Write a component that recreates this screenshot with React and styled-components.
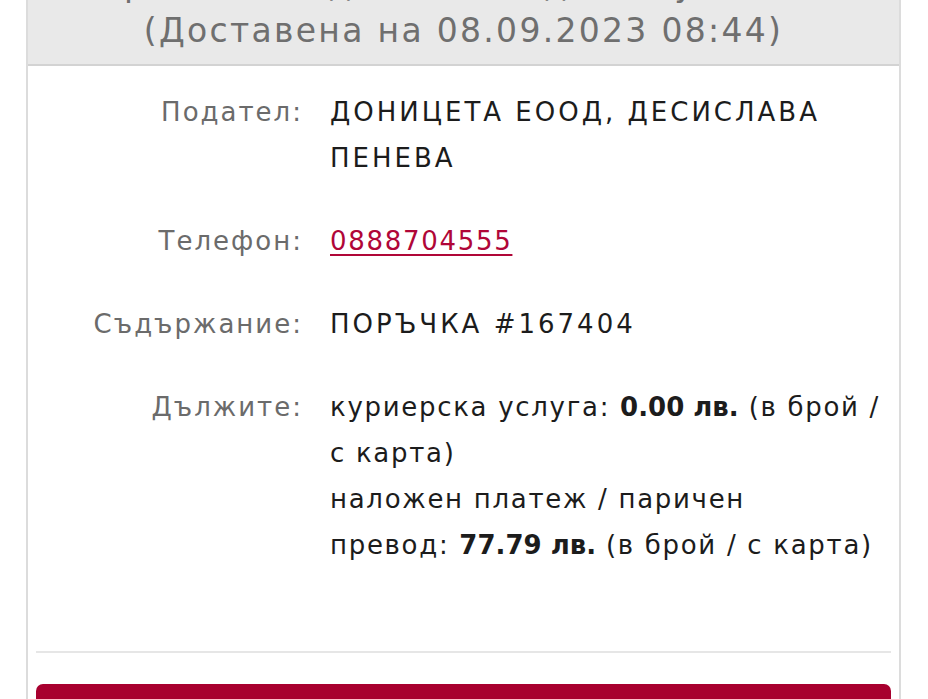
import React from 'react'
import styled, { createGlobalStyle } from 'styled-components'

const GlobalStyle = createGlobalStyle`
  html, body {
    margin: 0;
    padding: 0;
    background: #ffffff;
    font-family: "DejaVu Sans", "Noto Sans", sans-serif;
  }
`

const Card = styled.section`
  margin: -38px 27px 0 26px;
  border-left: 2px solid #dcdcdc;
  border-right: 2px solid #dcdcdc;
  background: #fff;
`

const Header = styled.header`
  background: #e9e9e9;
  border-bottom: 2px solid #d3d3d3;
  color: #6f6f6f;
  text-align: center;
  font-size: 33px;
  line-height: 46px;
  letter-spacing: 2.3px;
  padding-bottom: 10px;
`

const Body = styled.div`
  padding: 23px 8px 0;
`

const Details = styled.dl`
  display: grid;
  grid-template-columns: 267px 1fr;
  column-gap: 27px;
  row-gap: 37px;
  margin: 0;
  font-size: 26px;
  line-height: 46px;
  letter-spacing: 1.7px;
`

const Label = styled.dt`
  color: #6b6b6b;
  text-align: right;
  white-space: nowrap;
  letter-spacing: 2px;
`

const Value = styled.dd`
  margin: 0;
  color: #1c1c1c;
  white-space: nowrap;

  b {
    font-weight: 700;
    letter-spacing: 0;
  }
`

const Caps = styled.span`
  letter-spacing: 3px;
`

const Phone = styled.a`
  color: #b00638;
  text-decoration: underline;
  text-underline-offset: 4px;
  text-decoration-thickness: 2px;
`

const Divider = styled.hr`
  border: 0;
  border-top: 2px solid #e6e6e6;
  margin: 83px 0 31px;
`

const Action = styled.button`
  display: block;
  width: 100%;
  height: 60px;
  border: 0;
  border-radius: 7px;
  background: #a8002f;
`

const rows = [
  { label: 'Подател:', value: <Caps>ДОНИЦЕТА ЕООД, ДЕСИСЛАВА<br />ПЕНЕВА</Caps> },
  { label: 'Телефон:', value: <Phone href="tel:0888704555">0888704555</Phone> },
  { label: 'Съдържание:', value: <Caps>ПОРЪЧКА #167404</Caps> },
  {
    label: 'Дължите:',
    value: (
      <>
        куриерска услуга: <b>0.00 лв.</b> (в брой /<br />
        с карта)<br />
        наложен платеж / паричен<br />
        превод: <b>77.79 лв.</b> (в брой / с карта)
      </>
    ),
  },
]

export default function App() {
  return (
    <>
      <GlobalStyle />
      <Card>
        <Header>
          Пратката е доставена до получателя
          <br />
          (Доставена на 08.09.2023 08:44)
        </Header>
        <Body>
          <Details>
            {rows.map((row) => (
              <React.Fragment key={row.label}>
                <Label>{row.label}</Label>
                <Value>{row.value}</Value>
              </React.Fragment>
            ))}
          </Details>
          <Divider />
          <Action type="button" />
        </Body>
      </Card>
    </>
  )
}
